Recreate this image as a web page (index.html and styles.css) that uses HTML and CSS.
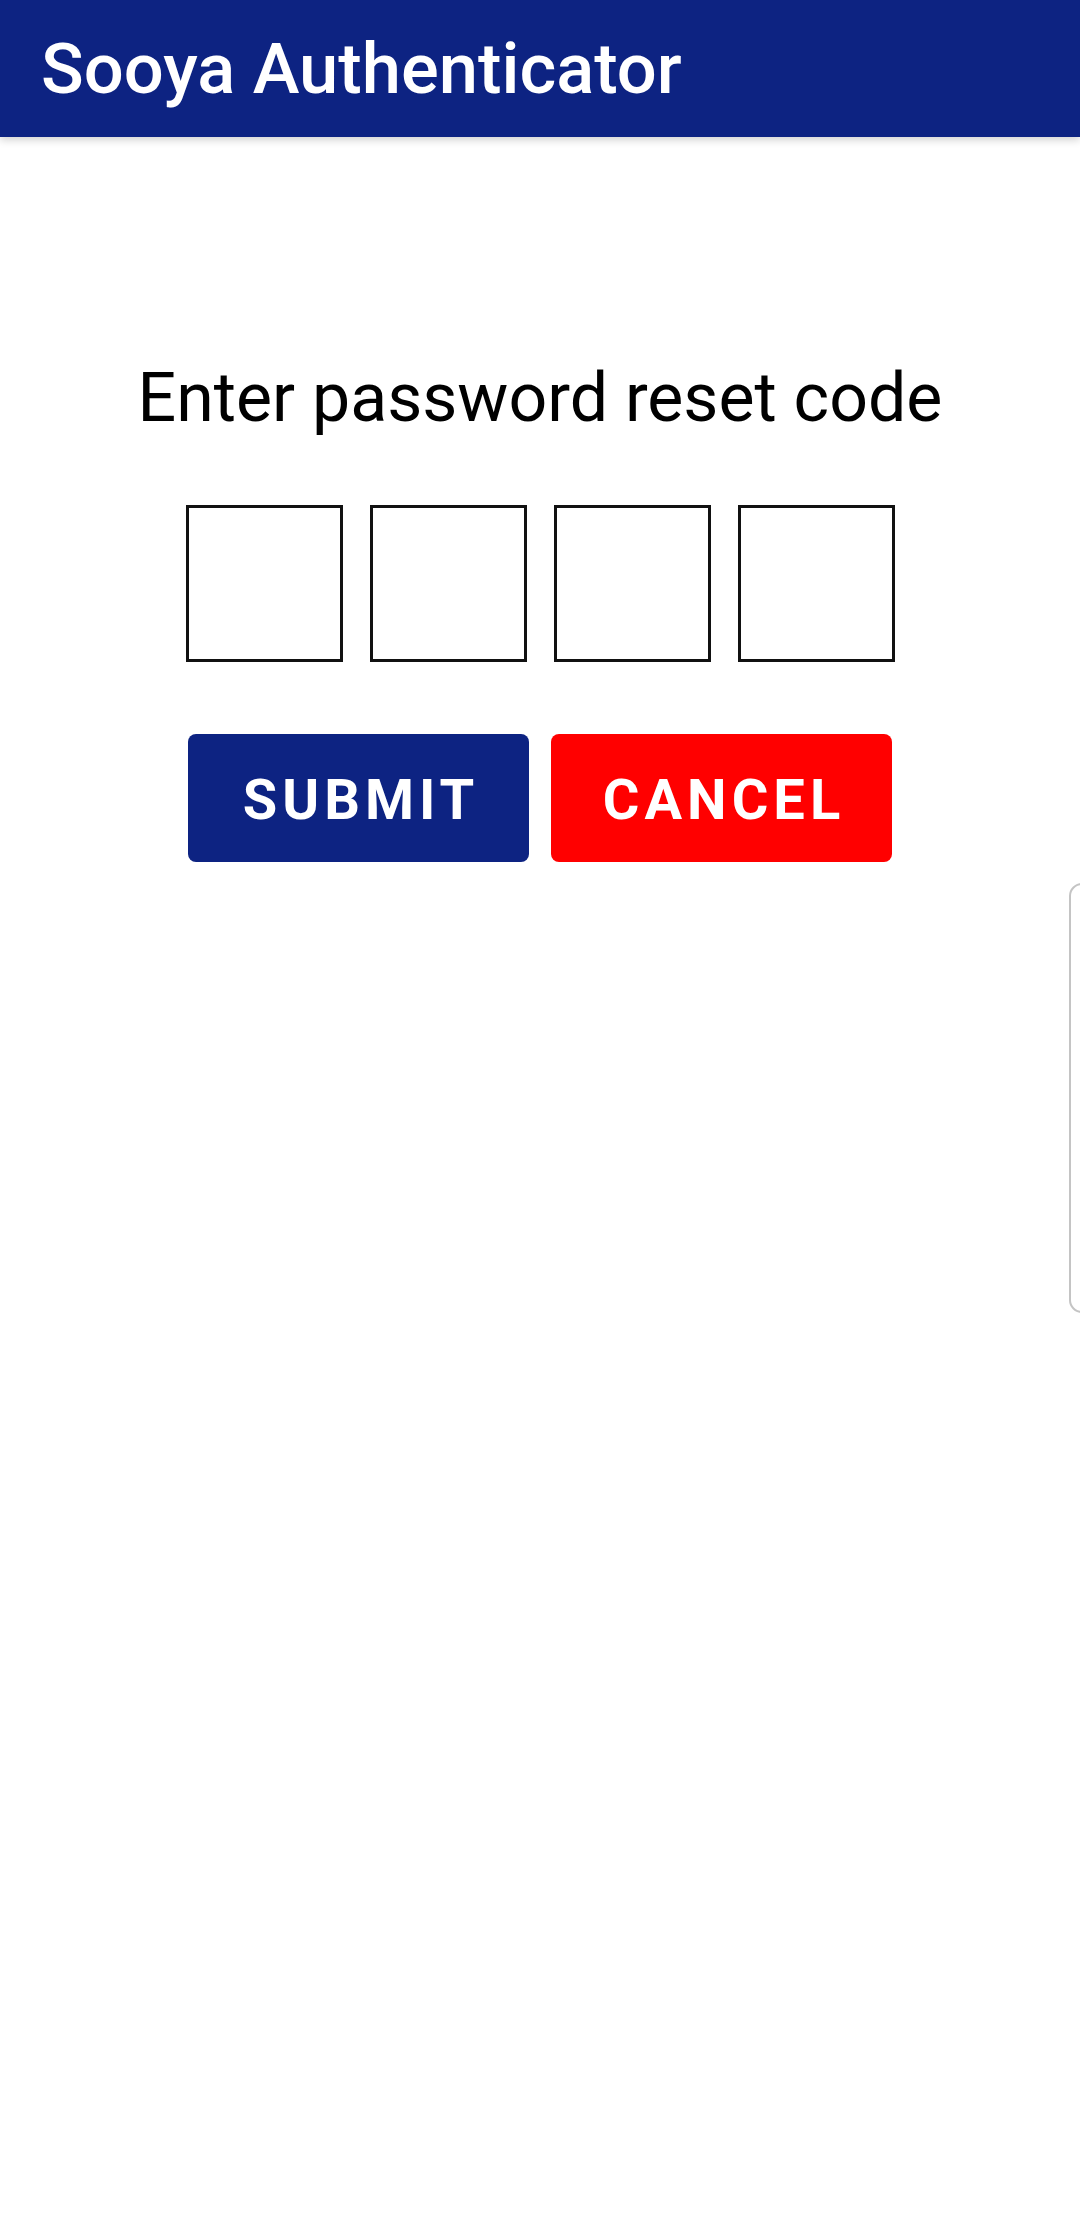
FILE: index.html
```html
<!DOCTYPE html>
<html lang="en">
<head>
    <meta charset="UTF-8">
    <meta name="viewport" content="width=device-width, initial-scale=1.0">
    <title>Sooya Authenticator</title>
    <link rel="stylesheet" href="styles.css">
</head>
<body>
    <header class="toolbar">
        <h1>Sooya Authenticator</h1>
    </header>

    <main class="reset">
        <p class="reset-title">Enter password reset code</p>

        <div class="code-boxes">
            <input class="code-box" type="text" maxlength="1">
            <input class="code-box" type="text" maxlength="1">
            <input class="code-box" type="text" maxlength="1">
            <input class="code-box" type="text" maxlength="1">
        </div>

        <div class="actions">
            <button class="btn btn-submit">Submit</button>
            <button class="btn btn-cancel">Cancel</button>
        </div>
    </main>

    <!-- edge panel handle -->
    <div class="edge-handle"></div>
</body>
</html>
```

FILE: styles.css
```css
body {
    font-family: Roboto, "Noto Sans", sans-serif;
    background-color: #ffffff;
    margin: 0;
    padding: 0;
    min-height: 2220px;
}
.toolbar {
    height: 137px;
    background-color: #0d2382;
    color: white;
    display: flex;
    align-items: center;
    padding: 0 41px;
    box-shadow: 0 3px 8px rgba(0, 0, 0, 0.18);
}
.toolbar h1 {
    margin: 0;
    font-size: 70.5px;
    font-weight: 500;
    line-height: 82px;
}
.reset {
    display: flex;
    flex-direction: column;
    align-items: center;
    padding-top: 221px;
}
.reset-title {
    margin: 0;
    font-size: 68px;
    line-height: 80px;
    color: #000;
}
.code-boxes {
    display: flex;
    gap: 27px;
    margin-top: 67px;
}
.code-box {
    width: 157px;
    height: 157px;
    box-sizing: border-box;
    border: 3px solid #111;
    border-radius: 0;
    padding: 0;
    font-size: 60px;
    text-align: center;
    outline: none;
}
.actions {
    display: flex;
    gap: 22px;
    margin-top: 72px;
}
.btn {
    width: 341px;
    height: 128px;
    border: none;
    border-radius: 8px;
    color: white;
    font-family: Roboto, sans-serif;
    font-size: 56px;
    font-weight: 700;
    letter-spacing: 0.09em;
    text-transform: uppercase;
    padding: 3px 0 0 5px;
}
.btn-submit {
    background-color: #0d2382;
}
.btn-cancel {
    background-color: #ff0000;
}
.edge-handle {
    position: absolute;
    top: 883px;
    left: 1069px;
    width: 30px;
    height: 430px;
    box-sizing: border-box;
    border: 2px solid #c4c4c4;
    border-radius: 13px;
}
```
